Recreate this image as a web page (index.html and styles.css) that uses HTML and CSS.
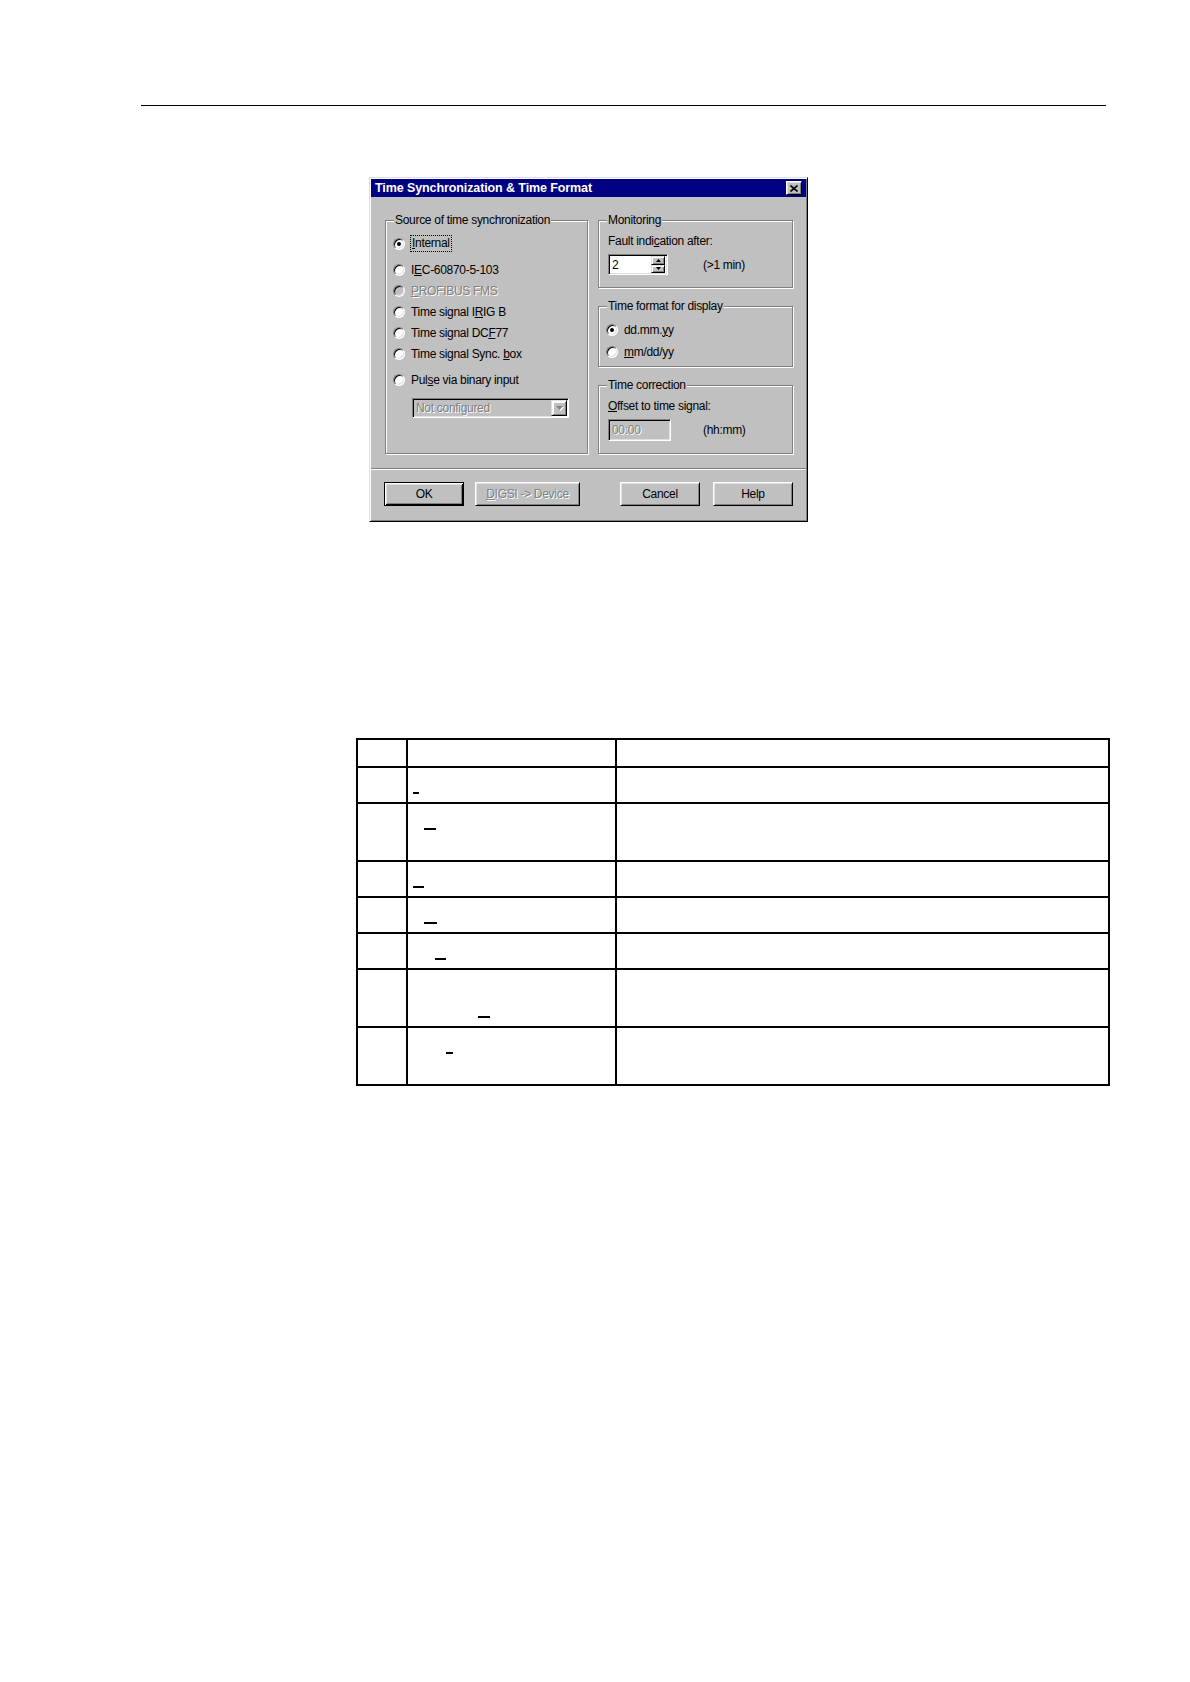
FILE: index.html
```html
<!DOCTYPE html>
<html>
<head>
<meta charset="utf-8">
<title>Time Synchronization &amp; Time Format</title>
<link rel="stylesheet" href="styles.css">
</head>
<body>
<div class="page">
  <div class="rule"></div>

  <div class="dialog">
    <div class="titlebar">
      <span class="title">Time Synchronization &amp; Time Format</span>
      <span class="close"><svg width="8" height="7" viewBox="0 0 8 7"><path d="M0.5 0.5 L7.5 6.5 M7.5 0.5 L0.5 6.5" stroke="#000" stroke-width="1.6" fill="none"/></svg></span>
    </div>

    <div class="dbody">
      <div class="group g-source">
        <div class="legend">Source of time synchronization</div>
        <div class="opt first"><span class="radio on"></span><span class="focus"><u>I</u>nternal</span></div>
        <div class="opt spaced"><span class="radio"></span><span>I<u>E</u>C-60870-5-103</span></div>
        <div class="opt"><span class="radio dis"></span><span class="distext"><u>P</u>ROFIBUS FMS</span></div>
        <div class="opt"><span class="radio"></span><span>Time signal I<u>R</u>IG B</span></div>
        <div class="opt"><span class="radio"></span><span>Time signal DC<u>F</u>77</span></div>
        <div class="opt"><span class="radio"></span><span>Time signal Sync. <u>b</u>ox</span></div>
        <div class="opt spaced"><span class="radio"></span><span>Pul<u>s</u>e via binary input</span></div>
        <div class="combo">
          <span class="distext">Not configured</span>
          <span class="ddbtn"><svg width="7" height="4" viewBox="0 0 7 4"><path d="M0 0 H7 L3.5 4 Z" fill="#808080"/></svg></span>
        </div>
      </div>

      <div class="rcol">
        <div class="group g-mon">
          <div class="legend">Monitoring</div>
          <div class="label">Fault indi<u>c</u>ation after:</div>
          <div class="field-row">
            <div class="spin">
              <span class="spinval">2</span>
              <span class="spinbtns">
                <span class="sbtn"><svg width="5" height="3" viewBox="0 0 5 3"><path d="M2.5 0 L5 3 H0 Z" fill="#000"/></svg></span>
                <span class="sbtn"><svg width="5" height="3" viewBox="0 0 5 3"><path d="M0 0 H5 L2.5 3 Z" fill="#000"/></svg></span>
              </span>
            </div>
            <span class="unit u1">(&gt;1 min)</span>
          </div>
        </div>

        <div class="group g-fmt">
          <div class="legend">Time format for display</div>
          <div class="opt r1"><span class="radio on"></span><span>dd.mm.<u>y</u>y</span></div>
          <div class="opt r2"><span class="radio"></span><span><u>m</u>m/dd/yy</span></div>
        </div>

        <div class="group g-corr">
          <div class="legend">Time correction</div>
          <div class="label"><u>O</u>ffset to time signal:</div>
          <div class="field-row">
            <div class="edit dis"><span class="distext">00:00</span></div>
            <span class="unit u2">(hh:mm)</span>
          </div>
        </div>
      </div>
    </div>

    <div class="sep"></div>

    <div class="buttons">
      <span class="btn default b-ok">OK</span>
      <span class="btn b-digsi"><span class="distext"><u>D</u>IGSI -&gt; Device</span></span>
      <span class="btn b-cancel">Cancel</span>
      <span class="btn b-help">Help</span>
    </div>
  </div>

  <div class="grid">
    <div class="c"></div><div class="c"></div><div class="c"></div>
    <div class="c"></div><div class="c"><span class="ul" style="margin-left:5px;width:6px;margin-top:24px"></span></div><div class="c"></div>
    <div class="c"></div><div class="c"><span class="ul" style="margin-left:16px;width:12px;margin-top:24px"></span></div><div class="c"></div>
    <div class="c"></div><div class="c"><span class="ul" style="margin-left:5px;width:11px;margin-top:24px"></span></div><div class="c"></div>
    <div class="c"></div><div class="c"><span class="ul" style="margin-left:16px;width:13px;margin-top:24px"></span></div><div class="c"></div>
    <div class="c"></div><div class="c"><span class="ul" style="margin-left:27px;width:11px;margin-top:24px"></span></div><div class="c"></div>
    <div class="c"></div><div class="c"><span class="ul" style="margin-left:70px;width:12px;margin-top:46px"></span></div><div class="c"></div>
    <div class="c"></div><div class="c"><span class="ul" style="margin-left:38px;width:7px;margin-top:24px"></span></div><div class="c"></div>
  </div>
</div>
</body>
</html>
```

FILE: styles.css
```css
* { box-sizing: border-box; }

body {
  margin: 0;
  background: #fff;
  font-family: "Liberation Sans", Arial, sans-serif;
}

.page {
  padding-top: 105px;
  padding-bottom: 60px;
}

.rule {
  margin-left: 141px;
  width: 965px;
  height: 1px;
  background: #000;
}

/* ---------- dialog ---------- */
.dialog {
  margin: 71px 0 0 369px;
  width: 439px;
  height: 345px;
  background: #c0c0c0;
  border: 1px solid;
  border-color: #dfdfdf #000 #000 #dfdfdf;
  padding: 1px;
  box-shadow: inset 1px 1px #fff, inset -1px -1px #808080;
  font-size: 12px;
  letter-spacing: -0.3px;
  color: #000;
  display: flex;
  flex-direction: column;
}

.titlebar {
  height: 18px;
  background: #000080;
  color: #fff;
  display: flex;
  align-items: center;
  justify-content: space-between;
  padding: 0 4px;
}

.title {
  font-weight: bold;
  font-size: 12.5px;
  letter-spacing: -0.1px;
}

.close {
  width: 16px;
  height: 14px;
  background: #c0c0c0;
  border: 1px solid;
  border-color: #fff #000 #000 #fff;
  box-shadow: inset 1px 1px #dfdfdf, inset -1px -1px #808080;
  display: flex;
  align-items: center;
  justify-content: center;
}

.dbody {
  display: flex;
  gap: 10px;
  padding: 23px 13px 0 14px;
}

.group {
  border: 1px solid #808080;
  box-shadow: inset 1px 1px #fff, 1px 1px #fff;
}

.legend {
  display: table;
  margin: -8px 0 0 8px;
  padding: 0 1px;
  line-height: 14px;
  height: 14px;
  background: #c0c0c0;
  white-space: nowrap;
}

.g-source {
  width: 203px;
  height: 234px;
}

.rcol {
  width: 195px;
  display: flex;
  flex-direction: column;
  gap: 18px;
}

.g-mon { height: 68px; }
.g-fmt { height: 61px; }
.g-corr { height: 69px; }

.opt {
  display: flex;
  align-items: center;
  height: 21px;
  padding-left: 7px;
  white-space: nowrap;
}

.opt.first { margin-top: 6px; }
.opt.spaced { margin-top: 5px; }
.g-fmt .opt.r1 { margin-top: 6px; }
.g-fmt .opt.r2 { margin-top: 1px; }

.radio {
  position: relative;
  flex: none;
  width: 12px;
  height: 12px;
  margin-right: 6px;
  border-radius: 50%;
  background: #fff;
  border: 1px solid;
  border-color: #808080 #fff #fff #808080;
  box-shadow: inset 1px 1px #000, inset -1px -1px #dfdfdf;
}

.radio.dis { background: #c0c0c0; }

.radio.on::after {
  content: "";
  position: absolute;
  left: 3px;
  top: 3px;
  width: 4px;
  height: 4px;
  border-radius: 50%;
  background: #000;
}

.focus {
  outline: 1px dotted #000;
  outline-offset: 0;
  padding: 0 1px;
  line-height: 15px;
}

.distext {
  color: #808080;
  text-shadow: 1px 1px 0 #fff;
}

u { text-decoration-thickness: 1px; text-underline-offset: 1px; }

.combo {
  margin: 8px 0 0 26px;
  width: 157px;
  height: 20px;
  display: flex;
  align-items: center;
  justify-content: space-between;
  padding-left: 3px;
  border: 1px solid;
  border-color: #808080 #fff #fff #808080;
  box-shadow: inset 1px 1px #000, inset -1px -1px #dfdfdf;
  background: #c0c0c0;
  padding-right: 1px;
}

.ddbtn {
  width: 16px;
  height: 16px;
  border: 1px solid;
  border-color: #dfdfdf #000 #000 #dfdfdf;
  box-shadow: inset 1px 1px #fff, inset -1px -1px #808080;
  display: flex;
  align-items: center;
  justify-content: center;
  filter: drop-shadow(1px 1px 0 #fff);
}

.label {
  margin: 7px 0 0 9px;
  line-height: 14px;
  white-space: nowrap;
}

.field-row {
  display: flex;
  align-items: center;
  margin: 6px 0 0 9px;
}

.spin {
  width: 60px;
  height: 21px;
  background: #fff;
  border: 1px solid;
  border-color: #808080 #fff #fff #808080;
  box-shadow: inset 1px 1px #000, inset -1px -1px #dfdfdf;
  display: flex;
  align-items: center;
  justify-content: space-between;
  padding: 2px 2px 2px 3px;
}

.spinbtns {
  display: flex;
  flex-direction: column;
  width: 14px;
  height: 17px;
}

.sbtn {
  flex: 1;
  background: #c0c0c0;
  border: 1px solid;
  border-color: #dfdfdf #000 #000 #dfdfdf;
  box-shadow: inset 1px 1px #fff, inset -1px -1px #808080;
  display: flex;
  align-items: center;
  justify-content: center;
}

.unit { white-space: nowrap; }
.u1 { margin-left: 35px; }
.u2 { margin-left: 32px; }

.edit {
  width: 63px;
  height: 22px;
  border: 1px solid;
  border-color: #808080 #fff #fff #808080;
  box-shadow: inset 1px 1px #000, inset -1px -1px #dfdfdf;
  background: #c0c0c0;
  display: flex;
  align-items: center;
  padding-left: 3px;
}

.sep {
  margin-top: 14px;
  height: 2px;
  border-top: 1px solid #808080;
  border-bottom: 1px solid #fff;
}

.buttons {
  display: flex;
  margin-top: 12px;
  padding-left: 13px;
}

.btn {
  height: 24px;
  display: flex;
  align-items: center;
  justify-content: center;
  border: 1px solid;
  border-color: #fff #000 #000 #fff;
  box-shadow: inset 1px 1px #dfdfdf, inset -1px -1px #808080;
  white-space: nowrap;
}

.btn.default {
  border-color: #000;
  box-shadow: inset 1px 1px #fff, inset -1px -1px #000, inset 2px 2px #dfdfdf, inset -2px -2px #808080;
}

.b-ok { width: 80px; }
.b-digsi { width: 105px; margin-left: 11px; }
.b-cancel { width: 80px; margin-left: 40px; }
.b-help { width: 80px; margin-left: 13px; }

/* ---------- table ---------- */
.grid {
  margin: 216px 0 0 356px;
  width: max-content;
  display: grid;
  grid-template-columns: 50px 209px 493px;
  grid-template-rows: 28px 36px 58px 36px 36px 36px 58px 58px;
  border-left: 2px solid #000;
  border-top: 2px solid #000;
}

.c {
  border-right: 2px solid #000;
  border-bottom: 2px solid #000;
}

.ul {
  display: block;
  height: 2px;
  background: #000;
}
```
